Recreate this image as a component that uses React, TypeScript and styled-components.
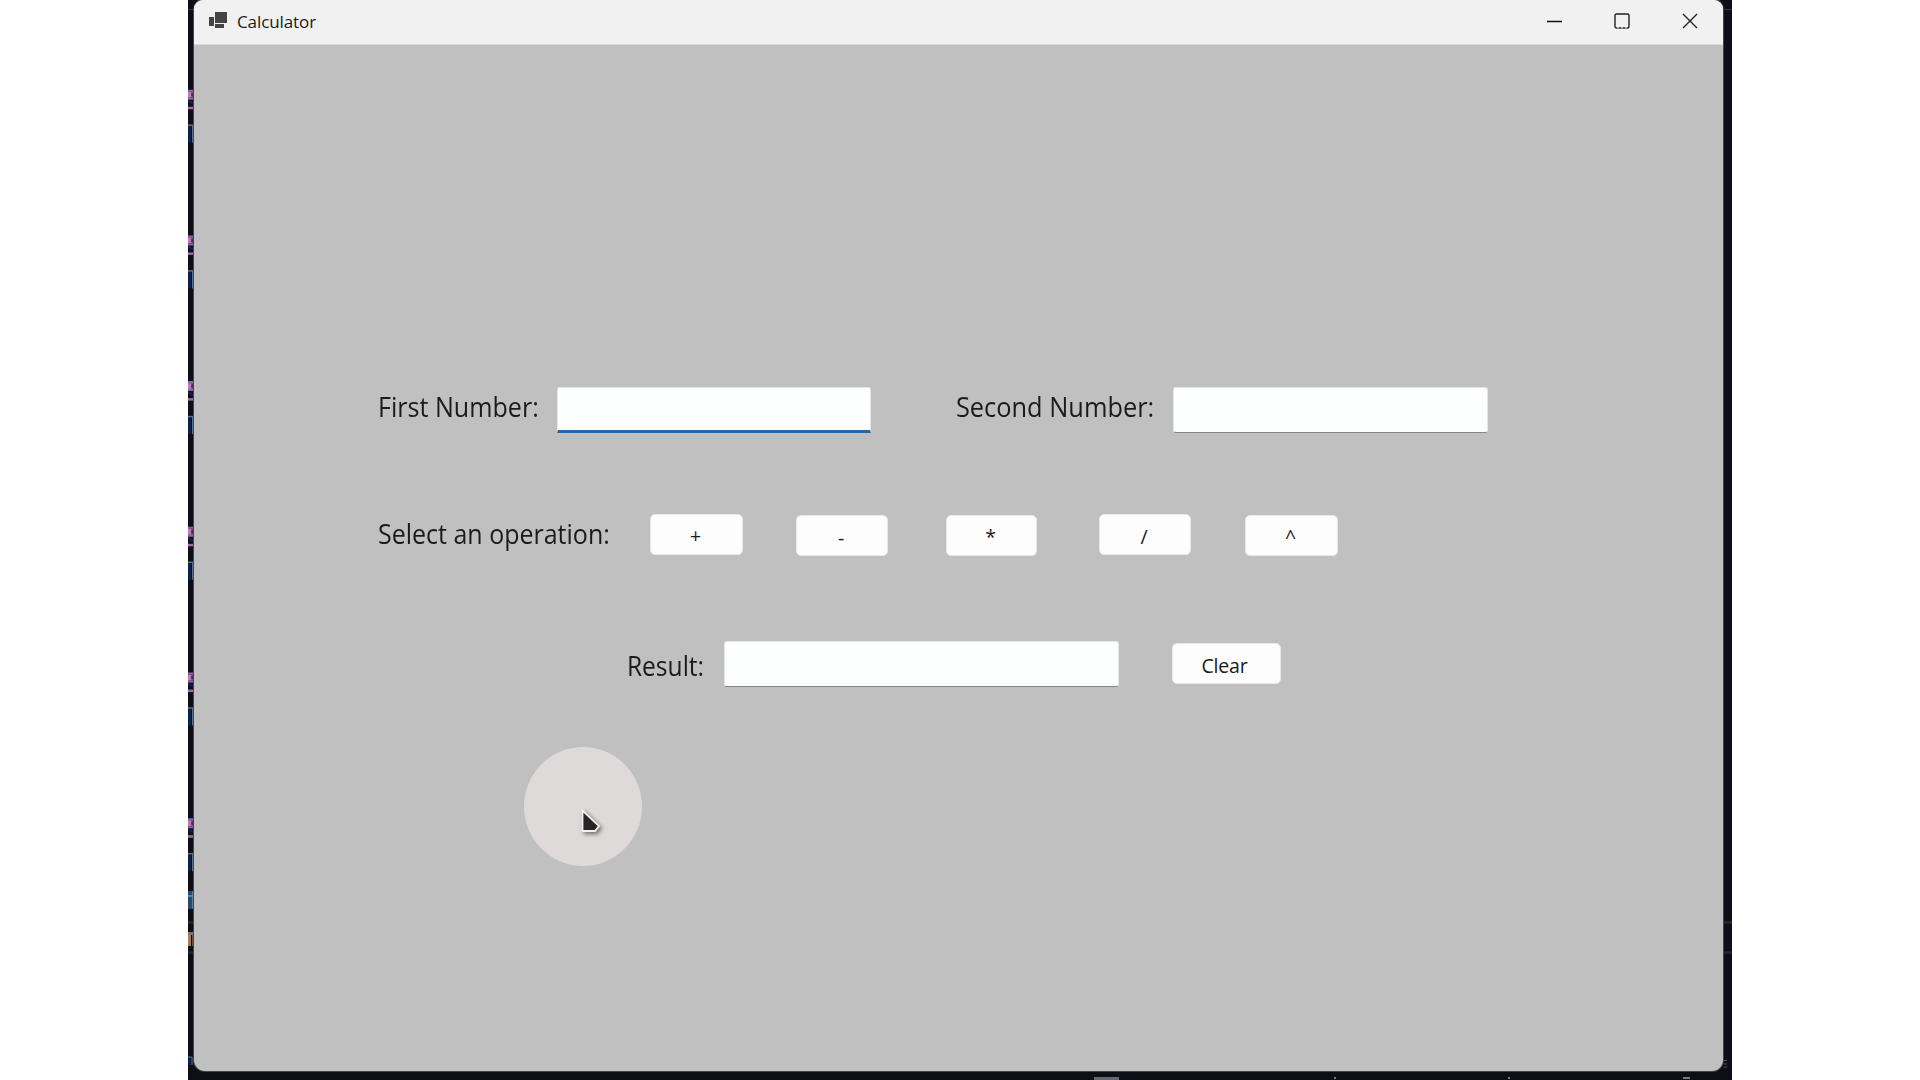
import React from "react";
import styled, { createGlobalStyle } from "styled-components";

const GlobalStyle = createGlobalStyle`
  * { box-sizing: border-box; }
  body {
    margin: 0;
    background: #fff;
    overflow: hidden;
    font-family: "Open Sans", "Noto Sans", sans-serif;
    color: #1b1b1b;
  }
`;

const Desktop = styled.main`
  display: flex;
  width: 1544px;
  height: 1080px;
  margin-left: 188px;
  background: #0d0e16;
`;

const Gutter = styled.div<{ $width: number }>`
  flex: 0 0 ${(p) => p.$width}px;
  height: 1080px;
  overflow: hidden;
  svg { display: block; }
`;

const Center = styled.div`
  flex: 0 0 1529px;
  display: flex;
  flex-direction: column;
`;

const Window = styled.section`
  display: flex;
  flex-direction: column;
  height: 1071px;
  border-radius: 9px 9px 11px 11px;
  overflow: hidden;
  background: #c0c0c0;
  box-shadow: 0 0 0 1px #44454b;
`;

const TitleBar = styled.header`
  display: flex;
  align-items: center;
  height: 45px;
  flex: none;
  padding: 0 25px 0 14px;
  background: #f1f1f1;
  border-bottom: 1px solid #dcdcdc;
`;

const AppIcon = styled.svg`
  width: 20px;
  height: 18px;
  margin-top: -5px;
`;

const Title = styled.h1`
  margin: -2px auto 0 9px;
  font-size: 17px;
  line-height: 43px;
  font-weight: 400;
  letter-spacing: -0.1px;
  white-space: nowrap;
`;

const Controls = styled.div`
  display: flex;
  gap: 52px;
  padding-bottom: 3px;
  svg { display: block; width: 16px; height: 16px; }
`;

const Form = styled.form`
  display: flex;
  flex-direction: column;
  padding-top: 342px;
`;

const Row = styled.div<{ $indent: number; $height: number }>`
  display: flex;
  align-items: flex-start;
  height: ${(p) => p.$height}px;
  padding-left: ${(p) => p.$indent}px;
`;

const Label = styled.label<{ $width: number; $drop?: number; $condense: number }>`
  flex: 0 0 ${(p) => p.$width}px;
  margin-top: ${(p) => p.$drop ?? 1}px;
  padding-left: 1px;
  font-size: 27px;
  line-height: 38px;
  transform: scaleX(${(p) => p.$condense});
  transform-origin: 0 50%;
  white-space: nowrap;
`;

const Field = styled.input<{ $width: number; $active?: boolean; $after?: number }>`
  flex: 0 0 ${(p) => p.$width}px;
  width: ${(p) => p.$width}px;
  height: 46px;
  margin-right: ${(p) => p.$after ?? 0}px;
  padding: 0 8px;
  border: 1px solid #e6e6e6;
  border-bottom: ${(p) => (p.$active ? "3px solid #2468a8" : "1px solid #858585")};
  border-radius: 3px;
  ${(p) => p.$active && "border-radius: 3px 3px 0 0;"}
  background: #fdfefe;
  font: inherit;
  font-size: 27px;
  outline: none;
`;

const Button = styled.button<{ $width: number; $before?: number; $drop?: number; $shift?: number }>`
  flex: 0 0 ${(p) => p.$width}px;
  height: 41px;
  margin: ${(p) => p.$drop ?? 0}px 0 0 ${(p) => p.$before ?? 0}px;
  padding: ${(p) => p.$shift ?? 0}px 2px 0 0;
  border: 1px solid #e8e8e8;
  border-radius: 5px;
  background: #fdfdfd;
  color: #1b1b1b;
  font-family: inherit;
  font-size: 19.5px;
  letter-spacing: -0.3px;
  line-height: 37px;
`;

const ClearButton = styled(Button)`
  padding-right: 4px;
  letter-spacing: -0.15px;
`;

const ClickHalo = styled.div`
  position: absolute;
  left: 524px;
  top: 747px;
  width: 118px;
  height: 119px;
  border-radius: 50%;
  background: #dddad9;
`;

const Cursor = styled.svg`
  position: absolute;
  left: 56px;
  top: 60px;
  width: 30px;
  height: 32px;
  filter: drop-shadow(2px 2px 2px rgba(0, 0, 0, 0.5));
`;

const PERIOD = 145.7;
const lines = [0, 1, 2, 3, 4, 5];

function CodeEdge() {
  return (
    <svg width="6" height="1080" viewBox="0 0 6 1080">
      <path d="M0 9.5h6" stroke="#36373f" />
      {lines.map((n) => (
        <g key={n} transform={`translate(0 ${(89.7 + n * PERIOD).toFixed(1)})`}>
          <path d="M0 1h6M0 9h6" stroke="#8e63b0" strokeWidth="2" />
          <path d="M0 2h3v6h-3z" fill="#bf7ab8" />
          <path d="M3 2h3v6h-3z" fill="#8b5d93" />
          <circle cx="5" cy="5" r="2" fill="#4a2c4a" />
          <path d="M0 11l5 3" stroke="#172447" strokeWidth="2" />
          <path d="M0 18.3h6" stroke="#a269aa" strokeWidth="2.5" />
          <path d="M0 36h3v17h-3z" fill="#0b2148" />
          <path d="M0 35.5h6" stroke="#65707f" strokeWidth="1.5" />
          <path d="M5 35v18" stroke="#5e7088" strokeWidth="2" />
        </g>
      ))}
      <path d="M0 891h4v18h-4z" fill="#27496f" />
      <path d="M4 891h2v18h-2z" fill="#5f7c98" />
      <path d="M0 896h6" stroke="#7890a8" strokeWidth="1.5" />
      <path d="M0 922.5h6M0 952.5h6" stroke="#222224" strokeWidth="3" />
      <path d="M0 932h6v3h-6z" fill="#857468" />
      <path d="M0 935h3v11h-3z" fill="#a47b60" />
      <path d="M4 935h2v11h-2z" fill="#6d5648" />
      <path d="M0 1057h3v8h-3z" fill="#0b2148" />
      <path d="M0 1057h4v8" fill="none" stroke="#66758a" />
    </svg>
  );
}

export default function App() {
  return (
    <>
      <GlobalStyle />
      <Desktop>
        <Gutter $width={6}>
          <CodeEdge />
        </Gutter>
        <Center>
          <Window>
            <TitleBar>
              <AppIcon viewBox="0 0 20 18">
                <path d="M7 1h12v11H7zM1 6h5v9H1zM7 13h9v4H7z" fill="#444" />
              </AppIcon>
              <Title>Calculator</Title>
              <Controls>
                <svg viewBox="0 0 16 16">
                  <path d="M1 8.5h15" stroke="#111" strokeWidth="1.4" />
                </svg>
                <svg viewBox="0 0 16 16">
                  <rect x="1" y="1" width="14" height="14" rx="1.5" fill="none" stroke="#222" strokeWidth="1.4" />
                  <path d="M3 14.9h11" stroke="#f1f1f1" strokeWidth="1" strokeDasharray="2 2" />
                </svg>
                <svg viewBox="0 0 16 16">
                  <path d="M1 1l14 14M15 1L1 15" stroke="#222" strokeWidth="1.4" />
                </svg>
              </Controls>
            </TitleBar>
            <Form>
              <Row $indent={183} $height={127}>
                <Label $width={180} $condense={0.93}>First Number:</Label>
                <Field $width={314} $active $after={84} />
                <Label $width={218} $condense={0.94}>Second Number:</Label>
                <Field $width={315} />
              </Row>
              <Row $indent={183} $height={127}>
                <Label $width={273} $condense={0.926}>Select an operation:</Label>
                <Button type="button" $width={93} $shift={2}>+</Button>
                <Button type="button" $width={92} $before={53} $drop={1} $shift={3}>-</Button>
                <Button type="button" $width={91} $before={58} $drop={1} $shift={1}>*</Button>
                <Button type="button" $width={92} $before={62} $shift={3}>/</Button>
                <Button type="button" $width={93} $before={54} $drop={1} $shift={1}>^</Button>
              </Row>
              <Row $indent={432} $height={50}>
                <Label $width={98} $drop={6} $condense={0.91}>Result:</Label>
                <Field $width={395} $after={53} />
                <ClearButton type="button" $width={109} $drop={2} $shift={3}>Clear</ClearButton>
              </Row>
            </Form>
          </Window>
          <svg width="1529" height="9" viewBox="0 0 1529 9">
            <path d="M900 6h25v3h-25z" fill="#676873" />
            <path d="M1140 7h2M1314 7h2M1489 7h7" stroke="#777983" strokeWidth="2" />
          </svg>
        </Center>
        <Gutter $width={9}>
          <svg width="9" height="1080" viewBox="0 0 9 1080">
            <path d="M0 9.5h9" stroke="#36373f" />
            <path d="M1 922.5h8M1 952.5h8" stroke="#222224" strokeWidth="3" />
            <path d="M1 1060.5h3M1 1064h3M1 1067h3" stroke="#50525a" />
          </svg>
        </Gutter>
      </Desktop>
      <ClickHalo>
        <Cursor viewBox="0 0 30 32">
          <path d="M2.5 3.5v20.5h12.5l4-5z" fill="#272526" stroke="#f2f0f0" strokeWidth="1.8" />
        </Cursor>
      </ClickHalo>
    </>
  );
}
